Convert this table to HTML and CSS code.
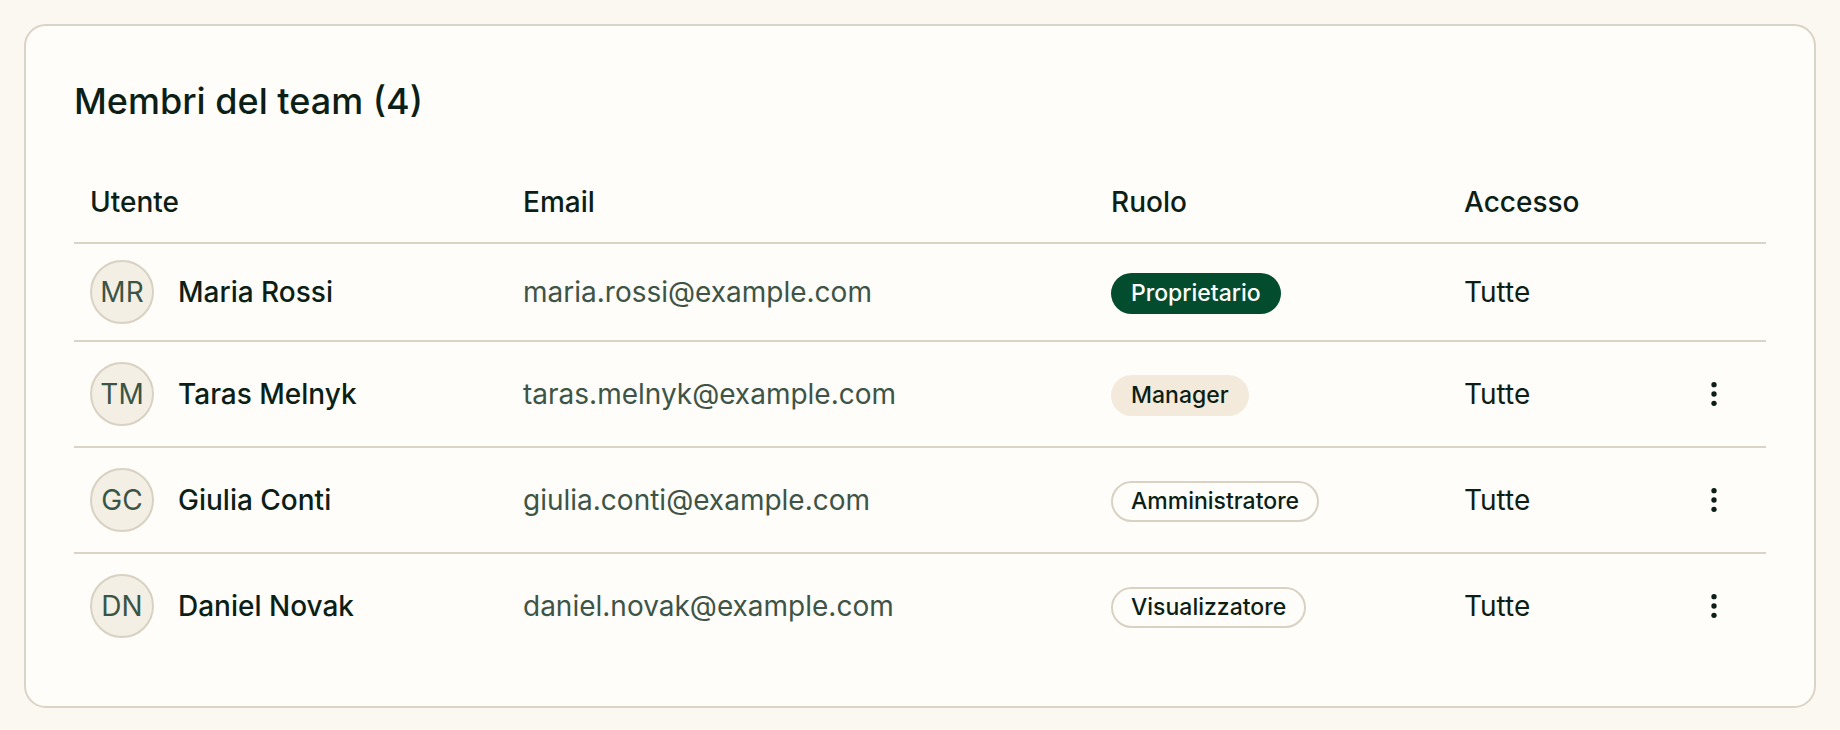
FILE: index.html
```html
<!DOCTYPE html>
<html lang="it">
<head>
<meta charset="utf-8">
<title>Membri del team</title>
<link rel="stylesheet" href="styles.css">
</head>
<body>
<main class="page">
  <section class="card">
    <h2 class="card-title">Membri del team (4)</h2>
    <table class="members">
      <colgroup>
        <col class="c-user"><col class="c-email"><col class="c-role"><col class="c-access"><col class="c-actions">
      </colgroup>
      <thead>
        <tr>
          <th>Utente</th>
          <th>Email</th>
          <th>Ruolo</th>
          <th>Accesso</th>
          <th></th>
        </tr>
      </thead>
      <tbody>
        <tr>
          <td><div class="user"><span class="avatar">MR</span><span class="name">Maria Rossi</span></div></td>
          <td class="email">maria.rossi@example.com</td>
          <td><span class="badge badge-owner">Proprietario</span></td>
          <td class="access">Tutte</td>
          <td class="actions"></td>
        </tr>
        <tr>
          <td><div class="user"><span class="avatar">TM</span><span class="name">Taras Melnyk</span></div></td>
          <td class="email">taras.melnyk@example.com</td>
          <td><span class="badge badge-manager">Manager</span></td>
          <td class="access">Tutte</td>
          <td class="actions"><button class="kebab" type="button" aria-label="Azioni"><svg viewBox="0 0 24 24" width="32" height="32"><circle cx="12" cy="5" r="2"/><circle cx="12" cy="12" r="2"/><circle cx="12" cy="19" r="2"/></svg></button></td>
        </tr>
        <tr>
          <td><div class="user"><span class="avatar">GC</span><span class="name">Giulia Conti</span></div></td>
          <td class="email">giulia.conti@example.com</td>
          <td><span class="badge badge-outline">Amministratore</span></td>
          <td class="access">Tutte</td>
          <td class="actions"><button class="kebab" type="button" aria-label="Azioni"><svg viewBox="0 0 24 24" width="32" height="32"><circle cx="12" cy="5" r="2"/><circle cx="12" cy="12" r="2"/><circle cx="12" cy="19" r="2"/></svg></button></td>
        </tr>
        <tr>
          <td><div class="user"><span class="avatar">DN</span><span class="name">Daniel Novak</span></div></td>
          <td class="email">daniel.novak@example.com</td>
          <td><span class="badge badge-outline">Visualizzatore</span></td>
          <td class="access">Tutte</td>
          <td class="actions"><button class="kebab" type="button" aria-label="Azioni"><svg viewBox="0 0 24 24" width="32" height="32"><circle cx="12" cy="5" r="2"/><circle cx="12" cy="12" r="2"/><circle cx="12" cy="19" r="2"/></svg></button></td>
        </tr>
      </tbody>
    </table>
  </section>
</main>
</body>
</html>
```

FILE: styles.css
```css
* { box-sizing: border-box; }

html, body {
  margin: 0;
  padding: 0;
  background: #fbf8f1;
}

body {
  font-family: Inter, "Noto Sans", "Liberation Sans", sans-serif;
  color: #0c1f16;
}

.page {
  padding: 24px;
}

.card {
  background: #fefdf9;
  border: 2px solid #dbd4c5;
  border-radius: 22px;
  padding: 51px 48px 48px 48px;
}

.card-title {
  margin: 0 0 37px 0;
  font-size: 36px;
  line-height: 49px;
  font-weight: 500;
}

.members {
  width: 100%;
  border-collapse: collapse;
  table-layout: fixed;
}

.c-user { width: 433px; }
.c-email { width: 588px; }
.c-role { width: 353px; }
.c-actions { width: 120px; }

.members th {
  text-align: left;
  font-size: 28px;
  line-height: 42px;
  font-weight: 500;
  padding: 18px 16px 19px 16px;
  border-bottom: 2px solid #dbd4c5;
}

.members td {
  font-size: 28px;
  line-height: 42px;
  padding: 16px 16px;
  vertical-align: middle;
}

.members tbody tr + tr td {
  border-top: 2px solid #dbd4c5;
}

.user {
  display: flex;
  align-items: center;
  gap: 24px;
}

.avatar {
  flex: none;
  width: 64px;
  height: 64px;
  border-radius: 50%;
  background: #f3efe5;
  border: 2px solid #d9d1c1;
  display: flex;
  align-items: center;
  justify-content: center;
  font-size: 28px;
  color: #3a5546;
}

.name {
  font-weight: 500;
}

.email {
  color: #3d5447;
}

.badge {
  display: inline-block;
  font-size: 23px;
  line-height: 33px;
  font-weight: 500;
  padding: 4px 20px;
  border-radius: 999px;
  vertical-align: middle;
}

.badge-owner {
  background: #034d2e;
  color: #ffffff;
}

.badge-manager {
  background: #f3eadb;
  color: #0c1f16;
}

.badge-outline {
  border: 2px solid #d9d1c2;
  padding: 2px 18px;
  color: #0c1f16;
}

.actions {
  text-align: right;
}

.kebab {
  width: 72px;
  height: 72px;
  border: 0;
  background: transparent;
  padding: 0;
  display: inline-flex;
  align-items: center;
  justify-content: center;
  vertical-align: middle;
  border-radius: 12px;
  cursor: pointer;
}

.kebab svg {
  fill: #0c1f16;
}
```
